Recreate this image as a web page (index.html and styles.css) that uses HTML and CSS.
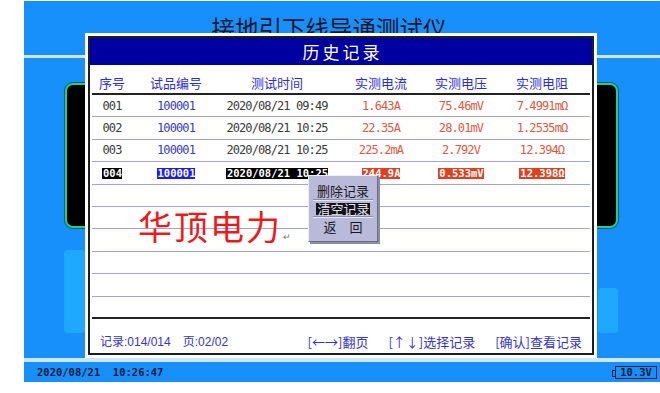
FILE: index.html
```html
<!DOCTYPE html>
<html lang="zh-CN">
<head>
<meta charset="utf-8">
<title>历史记录</title>
<link rel="stylesheet" href="styles.css">
</head>
<body>
<div class="device">
  <header class="titlebar"><h1 class="title">接地引下线导通测试仪</h1></header>
  <div class="rule"></div>
  <main class="main">
    <div class="scope"></div>
    <div class="pads"><div class="pad pad-left"></div><div class="pad pad-right"></div></div>
  </main>
  <div class="strip"></div>
  <footer class="statusbar">
    <span class="clock">2020/08/21  10:26:47</span>
    <span class="battery">10.3V</span>
  </footer>

  <section class="dialog">
    <div class="frame">
      <div class="dlg-title">历史记录</div>
      <div class="table">
        <div class="row head">
          <span>序号</span><span>试品编号</span><span>测试时间</span><span>实测电流</span><span>实测电压</span><span>实测电阻</span>
        </div>
        <div class="row data">
          <span>001</span><span class="code">100001</span><span>2020/08/21 09:49</span><span class="val">1.643A</span><span class="val">75.46mV</span><span class="val">7.4991mΩ</span>
        </div>
        <div class="row data">
          <span>002</span><span class="code">100001</span><span>2020/08/21 10:25</span><span class="val">22.35A</span><span class="val">28.01mV</span><span class="val">1.2535mΩ</span>
        </div>
        <div class="row data">
          <span>003</span><span class="code">100001</span><span>2020/08/21 10:25</span><span class="val">225.2mA</span><span class="val">2.792V</span><span class="val">12.394Ω</span>
        </div>
        <div class="row data selected">
          <span><b class="hl hl-black">004</b></span><span><b class="hl hl-blue">100001</b></span><span><b class="hl hl-black">2020/08/21 10:25</b></span><span><b class="hl hl-red">244.9A</b></span><span><b class="hl hl-red">0.533mV</b></span><span><b class="hl hl-red">12.398Ω</b></span>
        </div>
        <div class="row data"></div>
        <div class="row data"></div>
        <div class="row data"></div>
        <div class="row data"></div>
        <div class="row data"></div>
        <div class="row data last"></div>
      </div>
      <div class="footer">
        <span class="f-count">记录:014/014</span>
        <span class="f-page">页:02/02</span>
        <span class="f-key f-first">[←→]翻页</span>
        <span class="f-key">[↑↓]选择记录</span>
        <span class="f-key">[确认]查看记录</span>
      </div>
      <div class="brand">华顶电力<span class="mark">↵</span></div>
      <ul class="menu">
        <li class="item">删除记录</li>
        <li class="sep"></li>
        <li class="item item-active"><span>清空记录</span></li>
        <li class="sep"></li>
        <li class="item item-back">返　回</li>
      </ul>
    </div>
  </section>
</div>
</body>
</html>
```

FILE: styles.css
```css
* { box-sizing: border-box; margin: 0; padding: 0; }

html, body {
  width: 660px;
  height: 393px;
  background: #ffffff;
  overflow: hidden;
}

body {
  font-family: "Noto Sans CJK SC", "Liberation Sans", sans-serif;
}

.device {
  position: relative;
  width: 636px;
  margin: 1px 0 0 24px;
}

.titlebar {
  height: 54px;
  background: #1890fc;
  padding: 15px 26px 0 0;
  text-align: center;
}

.title {
  font-size: 23.5px;
  line-height: 24px;
  font-weight: 400;
  color: #16162c;
}

.rule { height: 3px; background: #cfe5fb; }

.main {
  height: 300px;
  background: #1890fc;
  padding-top: 25px;
}

.scope {
  margin-left: 41px;
  width: 553px;
  height: 145px;
  background: #000;
  border: 2px solid #27cf7c;
  border-radius: 8px;
  box-shadow: 0 0 0 1px #0d5a8a;
}

.pads {
  display: flex;
  align-items: flex-start;
  gap: 513px;
  padding-left: 40px;
  margin-top: 22px;
}

.pad { background: #1ea9ff; border-radius: 4px; }
.pad-left { width: 21px; height: 83px; }
.pad-right { width: 20px; height: 45px; margin-top: 38px; }

.strip { height: 4px; background: #cfe5fb; }

.statusbar {
  height: 20px;
  background: #1890fc;
  display: flex;
  align-items: center;
  justify-content: space-between;
  padding: 0 3px 0 13px;
}

.clock {
  white-space: pre;
  font: bold 10.5px/12px "DejaVu Sans Mono", monospace;
  color: #0b1933;
}

.battery {
  position: relative;
  width: 42px;
  height: 13px;
  border: 1px solid #0e1d3a;
  font: bold 10.5px/11px "DejaVu Sans Mono", monospace;
  color: #0b1933;
  text-align: center;
}

.battery::before {
  content: "";
  position: absolute;
  left: -4px;
  top: 3px;
  width: 3px;
  height: 5px;
  border: 1px solid #0e1d3a;
  border-right: none;
}

/* dialog */
.dialog {
  position: absolute;
  left: 61px;
  top: 32px;
  width: 512px;
  height: 325px;
  border: 3px solid #ffffff;
  background: #ffffff;
}

.frame {
  position: relative;
  height: 100%;
  border: 2px solid #1e1e1e;
  display: flex;
  flex-direction: column;
}

.dlg-title {
  height: 27px;
  background: #0000a0;
  color: #ffffff;
  text-align: center;
  font-size: 17px;
  line-height: 27px;
  letter-spacing: 3px;
  padding-left: 3px;
}

.table { margin: 0 2px; }

.row {
  display: grid;
  grid-template-columns: 40px 88px 114px 94px 66px 96px;
  text-align: center;
}

.head {
  height: 30px;
  border-bottom: 2px solid #222;
  align-items: end;
  padding-bottom: 2px;
  color: #2d2de0;
  font-size: 13px;
  line-height: 16px;
}

.data {
  height: 22.4px;
  border-bottom: 1px solid #a4a4d2;
  align-items: center;
  color: #3a3a3a;
  font-family: "DejaVu Sans Mono", monospace;
  font-size: 12px;
  letter-spacing: -0.9px;
  line-height: 14px;
  white-space: pre;
}

.data.last { border-bottom: 2px solid #222; }

.code { color: #3838cc; }
.val { color: #e2583f; }

.hl {
  display: inline-block;
  font: bold 10.5px/11px "DejaVu Sans Mono", monospace;
  letter-spacing: 0;
  color: #ffffff;
  padding: 0 0 0 1px;
}
.hl-black { background: #000000; }
.hl-blue { background: #1c1cf0; }
.hl-red { background: #e04020; }

.footer {
  flex: 1;
  display: flex;
  align-items: flex-start;
  padding: 15px 10px 0 10px;
  color: #3434d0;
  font-family: "Liberation Sans", "Noto Sans CJK SC", sans-serif;
  font-size: 12px;
  line-height: 16px;
  white-space: nowrap;
}

.f-page { margin-left: 12px; }
.f-key {
  margin-left: 20px;
  font-family: "Noto Sans CJK SC", sans-serif;
  font-size: 13px;
}
.f-first { margin-left: auto; }

.brand {
  position: absolute;
  left: 48px;
  top: 171px;
  font-size: 34px;
  line-height: 34px;
  letter-spacing: 2px;
  color: #ee1a1a;
  white-space: nowrap;
}

.mark {
  font-size: 9px;
  line-height: 9px;
  color: #777777;
  letter-spacing: 0;
  margin-left: 1px;
}

.menu {
  position: absolute;
  left: 218px;
  top: 137px;
  width: 70px;
  height: 67px;
  list-style: none;
  background: #b9b9d9;
  border: 1px solid;
  border-color: #eeeefa #6c6c8c #6c6c8c #eeeefa;
  box-shadow: 2px 2px 0 #8c8c9c;
  padding-top: 7px;
  text-align: center;
  font-size: 13px;
  color: #1a1a1a;
}

.item { height: 15px; line-height: 15px; }

.sep {
  height: 2px;
  margin: 1px 4px 0;
  border-top: 1px solid #8a8aaa;
  border-bottom: 1px solid #e6e6f4;
}

.item-active { height: 12px; line-height: 12px; margin-top: 2px; }
.item-active span {
  display: inline-block;
  background: #111118;
  color: #e4e4ee;
  padding: 0 0 0 1px;
}

.item-back { margin-top: 1px; line-height: 15px; }
```
